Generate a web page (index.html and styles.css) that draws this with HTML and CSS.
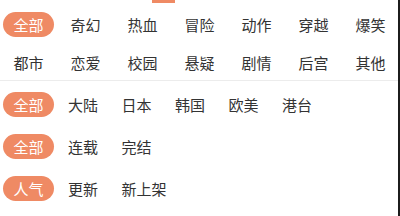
FILE: index.html
```html
<!DOCTYPE html>
<html lang="zh">
<head>
<meta charset="utf-8">
<link rel="stylesheet" href="styles.css">
</head>
<body>
<div class="page">
  <div class="indicator"></div>
  <div class="genres">
    <div class="grid">
      <span class="cell"><span class="pill">全部</span></span>
      <span class="cell">奇幻</span>
      <span class="cell">热血</span>
      <span class="cell">冒险</span>
      <span class="cell">动作</span>
      <span class="cell">穿越</span>
      <span class="cell">爆笑</span>
      <span class="cell">都市</span>
      <span class="cell">恋爱</span>
      <span class="cell">校园</span>
      <span class="cell">悬疑</span>
      <span class="cell">剧情</span>
      <span class="cell">后宫</span>
      <span class="cell">其他</span>
    </div>
  </div>
  <div class="filters">
    <div class="row">
      <span class="pill lead">全部</span>
      <span class="opt">大陆</span>
      <span class="opt">日本</span>
      <span class="opt">韩国</span>
      <span class="opt">欧美</span>
      <span class="opt">港台</span>
    </div>
    <div class="row">
      <span class="pill lead">全部</span>
      <span class="opt">连载</span>
      <span class="opt">完结</span>
    </div>
    <div class="row">
      <span class="pill lead">人气</span>
      <span class="opt">更新</span>
      <span class="opt">新上架</span>
    </div>
  </div>
</div>
</body>
</html>
```

FILE: styles.css
```css
html, body {
  margin: 0;
  padding: 0;
  background: #ffffff;
}
body {
  font-family: "Noto Sans CJK SC", "Noto Sans", sans-serif;
  font-size: 15px;
  color: #333333;
}
.page {
  width: 398px;
  height: 216px;
  border-right: 2px solid #1c1c1c;
  overflow: hidden;
}
.indicator {
  width: 23px;
  height: 3px;
  margin-left: 152px;
  background: #ef8a64;
}
.genres {
  padding: 9px 0 5px 0;
  border-bottom: 1px solid #ececec;
}
.grid {
  display: grid;
  grid-template-columns: repeat(7, 57px);
  grid-auto-rows: 25px;
  row-gap: 12.5px;
}
.cell {
  display: flex;
  align-items: center;
  justify-content: center;
  line-height: 25px;
  white-space: nowrap;
}
.pill {
  display: inline-flex;
  align-items: center;
  justify-content: center;
  width: 51px;
  height: 25px;
  border-radius: 12.5px;
  background: #ef8a64;
  color: #ffffff;
  line-height: 25px;
}
.filters {
  padding-top: 11px;
  display: flex;
  flex-direction: column;
  gap: 17px;
}
.row {
  display: flex;
  align-items: center;
  height: 25px;
  padding-left: 3px;
}
.lead {
  margin-right: 14px;
}
.opt {
  margin-right: 23.5px;
  line-height: 25px;
  white-space: nowrap;
}
```
